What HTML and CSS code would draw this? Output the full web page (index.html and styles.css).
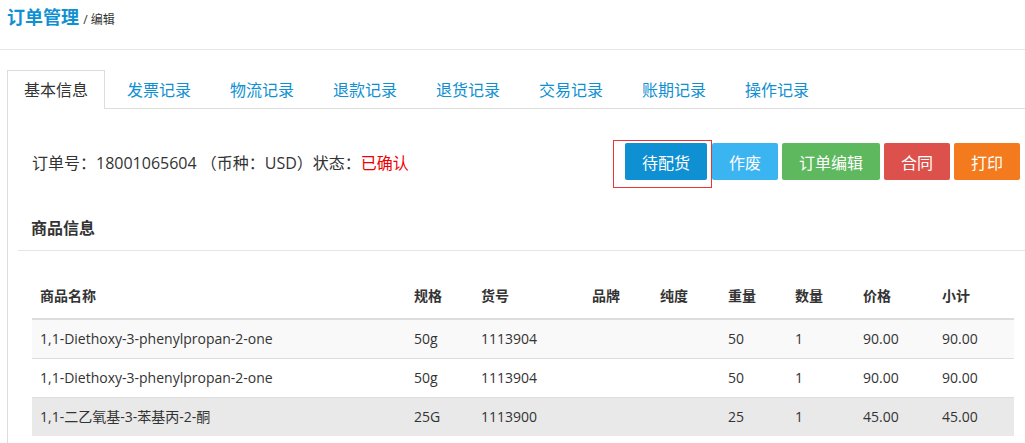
FILE: index.html
```html
<!DOCTYPE html>
<html lang="zh-CN">
<head>
    <meta charset="UTF-8">
    <title>订单管理 - 编辑</title>
    <link rel="stylesheet" href="styles.css">
</head>
<body>
    <div class="page-head">
        <span class="page-title">订单管理</span>
        <span class="page-sub">/ 编辑</span>
    </div>

    <div class="main">
        <ul class="tabs">
            <li class="active">基本信息</li>
            <li>发票记录</li>
            <li>物流记录</li>
            <li>退款记录</li>
            <li>退货记录</li>
            <li>交易记录</li>
            <li>账期记录</li>
            <li>操作记录</li>
        </ul>

        <div class="panel">
            <div class="order-bar">
                <div class="order-info">订单号：18001065604 （币种：USD）状态：<span class="status">已确认</span></div>
                <div class="actions">
                    <span class="marked">
                        <button class="btn btn-primary">待配货</button>
                        <span class="mark"></span>
                    </span>
                    <button class="btn btn-secondary">作废</button>
                    <button class="btn btn-success">订单编辑</button>
                    <button class="btn btn-danger">合同</button>
                    <button class="btn btn-warning">打印</button>
                </div>
            </div>

            <div class="section-title">商品信息</div>

            <table class="goods">
                <colgroup>
                    <col style="width: 374px">
                    <col style="width: 67px">
                    <col style="width: 111px">
                    <col style="width: 68px">
                    <col style="width: 68px">
                    <col style="width: 67px">
                    <col style="width: 68px">
                    <col style="width: 79px">
                    <col style="width: 80px">
                </colgroup>
                <thead>
                    <tr>
                        <th>商品名称</th>
                        <th>规格</th>
                        <th>货号</th>
                        <th>品牌</th>
                        <th>纯度</th>
                        <th>重量</th>
                        <th>数量</th>
                        <th>价格</th>
                        <th>小计</th>
                    </tr>
                </thead>
                <tbody>
                    <tr class="striped">
                        <td>1,1-Diethoxy-3-phenylpropan-2-one</td>
                        <td>50g</td>
                        <td>1113904</td>
                        <td></td>
                        <td></td>
                        <td>50</td>
                        <td>1</td>
                        <td>90.00</td>
                        <td>90.00</td>
                    </tr>
                    <tr>
                        <td>1,1-Diethoxy-3-phenylpropan-2-one</td>
                        <td>50g</td>
                        <td>1113904</td>
                        <td></td>
                        <td></td>
                        <td>50</td>
                        <td>1</td>
                        <td>90.00</td>
                        <td>90.00</td>
                    </tr>
                    <tr class="hover">
                        <td>1,1-二乙氧基-3-苯基丙-2-酮</td>
                        <td>25G</td>
                        <td>1113900</td>
                        <td></td>
                        <td></td>
                        <td>25</td>
                        <td>1</td>
                        <td>45.00</td>
                        <td>45.00</td>
                    </tr>
                </tbody>
            </table>
        </div>
    </div>
</body>
</html>
```

FILE: styles.css
```css
body {
    margin: 0;
    padding: 0;
    font-family: "Open Sans", "Noto Sans CJK SC", sans-serif;
    color: #333;
    background-color: #fff;
}
.page-head {
    height: 50px;
    padding: 3px 7px 0;
    border-bottom: 1px solid #e6e6e6;
    box-sizing: border-box;
}
.page-title {
    font-size: 18px;
    font-weight: bold;
    color: #0e90d2;
}
.page-sub {
    font-size: 12px;
    color: #333;
}
.main {
    padding: 20px 0 0 7px;
}
.tabs {
    display: flex;
    margin: 0;
    padding: 0;
    list-style: none;
    border-bottom: 1px solid #ddd;
    height: 38px;
}
.tabs li {
    margin-right: 5px;
    margin-bottom: -1px;
    padding: 0 16px;
    line-height: 38px;
    font-size: 16px;
    color: #0e90d2;
    border: 1px solid transparent;
    border-bottom: none;
}
.tabs li.active {
    color: #333;
    background-color: #fff;
    border-color: #ddd;
}
.panel {
    border-left: 1px solid #ddd;
    padding-bottom: 20px;
}
.order-bar {
    display: flex;
    justify-content: space-between;
    align-items: center;
    padding: 34px 5px 0 24px;
}
.order-info {
    font-size: 16px;
}
.status {
    color: #e00;
}
.actions {
    display: flex;
    gap: 4px;
}
.marked {
    position: relative;
    margin-right: 1px;
}
.mark {
    position: absolute;
    left: -12px;
    top: -3px;
    right: -5px;
    bottom: -8px;
    border: 1px solid #e33;
}
.btn {
    height: 37px;
    padding: 0 16px;
    font-family: inherit;
    font-size: 16px;
    color: #fff;
    border: 1px solid transparent;
    border-radius: 2px;
}
.btn-primary {
    background-color: #0e90d2;
}
.btn-secondary {
    background-color: #3bb4f2;
}
.btn-success {
    background-color: #5eb95e;
}
.btn-danger {
    background-color: #dd514c;
}
.btn-warning {
    background-color: #f37b1d;
}
.section-title {
    margin: 35px 0 0 10px;
    padding: 0 0 11px 13px;
    font-size: 16px;
    font-weight: bold;
    border-bottom: 1px solid #e5e5e5;
}
.goods {
    margin: 26px 0 0 24px;
    width: 982px;
    table-layout: fixed;
    border-collapse: collapse;
    font-size: 14px;
}
.goods th,
.goods td {
    padding: 8px;
    line-height: 22px;
    text-align: left;
}
.goods th {
    padding-bottom: 11px;
    font-weight: bold;
    border-bottom: 2px solid #ddd;
}
.goods td {
    border-top: 1px solid #ddd;
}
.goods tbody tr:first-child td {
    border-top: none;
}
.goods .striped {
    background-color: #f9f9f9;
}
.goods .hover {
    background-color: #e9e9e9;
}
```
